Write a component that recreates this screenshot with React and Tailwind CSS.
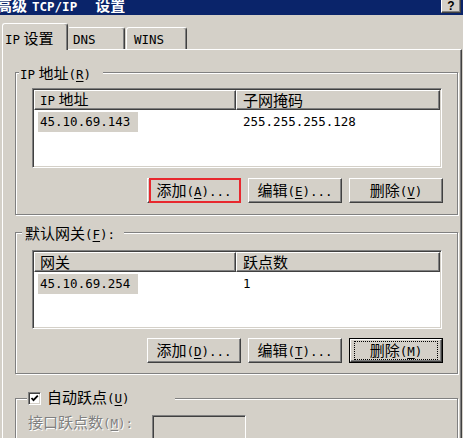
import React from 'react'

const raised = 'border border-t-white border-l-white border-r-[#404040] border-b-[#404040] shadow-[inset_-1px_-1px_0_#808080]'
const sunken = 'border border-t-[#808080] border-l-[#808080] border-r-white border-b-white shadow-[inset_1px_1px_0_#404040,inset_-1px_-1px_0_#d4d0c8]'
const etched = 'border border-[#808080] shadow-[inset_1px_1px_0_#fff,1px_1px_0_#fff]'

// SimSun draws latin at half width, a mono face gets close
function Latin({ children }) {
  return <span className="font-['DejaVu_Sans_Mono',monospace] text-[12.5px]">{children}</span>
}

function Key({ k, dots }) {
  return (
    <Latin>
      (<u className="underline-offset-2">{k}</u>){dots ? '...' : ''}
    </Latin>
  )
}

function Button({ children, isDefault, marked }) {
  if (isDefault) {
    return (
      <div className="w-[94px] h-[25px] border border-black bg-[#d4d0c8]">
        <div className={`h-full ${raised} px-[3px] py-px`}>
          <div className="h-full border border-dotted border-black flex items-center justify-center leading-[16px]">
            <span>{children}</span>
          </div>
        </div>
      </div>
    )
  }
  return (
    <div className={`relative w-[94px] h-[25px] bg-[#d4d0c8] ${raised} flex items-center justify-center leading-[16px]`}>
      <span>{children}</span>
      {marked && <span className="absolute -top-px -bottom-px left-px -right-px border-2 border-[#e8282e]" />}
    </div>
  )
}

function ListView({ height, col1, col2, val1, val2 }) {
  return (
    <div className={`${height} ${sunken} bg-white p-px`}>
      <div className="flex h-[20px] leading-[16px]">
        <div className={`w-[202px] ${raised} bg-[#d4d0c8] flex items-center pl-[5px]`}>
          <span className="whitespace-pre">{col1}</span>
        </div>
        <div className={`flex-1 ${raised} bg-[#d4d0c8] flex items-center pl-[6px]`}>
          <span>{col2}</span>
        </div>
      </div>
      <div className="mt-[2px] flex h-[20px] leading-[16px]">
        <div className="w-[202px] flex">
          <div className="ml-[4px] w-[100px] pl-[2px] bg-[#d4d0c8] flex items-center">
            <Latin>{val1}</Latin>
          </div>
        </div>
        <div className="flex-1 flex items-center pl-[7px]">
          <Latin>{val2}</Latin>
        </div>
      </div>
    </div>
  )
}

export default function App() {
  return (
    <div className="w-[463px] h-[438px] overflow-hidden bg-[#d4d0c8] text-black text-[15px] leading-none font-['Noto_Sans_CJK_SC','Noto_Sans_CJK_TC',sans-serif] select-none">
      {/* Barre de titre */}
      <div className="h-[15px] bg-[#0a246a] flex items-start justify-between overflow-hidden">
        <div className="-ml-[3px] -mt-[3px] h-[16px] leading-[16px] text-white font-bold whitespace-nowrap">
          高级
          <span className="ml-[5px]">
            <Latin>TCP/IP</Latin>
          </span>
          <span className="ml-[18px]">设置</span>
        </div>
        <div className={`mr-[2px] w-[20px] h-[14px] -mt-px bg-[#d4d0c8] ${raised} flex items-center justify-center text-[12px] font-bold font-['Liberation_Sans',sans-serif]`}>
          ?
        </div>
      </div>

      {/* Onglets */}
      <div className="h-[34px] pt-[8px] pl-[2px] flex items-end">
        <div className="relative z-10 w-[66px] h-[27px] -mb-px bg-[#d4d0c8] border-t border-l border-r border-t-white border-l-white border-r-[#404040] shadow-[inset_-1px_0_0_#808080] rounded-t-[3px] pl-[2px] pt-[6px] leading-[16px] whitespace-nowrap">
          <Latin>IP</Latin> 设置
        </div>
        <div className="w-[56px] h-[22px] ml-px border-t border-r border-t-white border-r-[#404040] shadow-[inset_-1px_0_0_#808080] rounded-tr-[3px] pl-[4px] pt-[2px] leading-[16px]">
          <Latin>DNS</Latin>
        </div>
        <div className="w-[61px] h-[22px] ml-px border-t border-l border-r border-t-white border-l-white border-r-[#404040] shadow-[inset_-1px_0_0_#808080] rounded-t-[3px] pl-[7px] pt-[2px] leading-[16px]">
          <Latin>WINS</Latin>
        </div>
      </div>

      {/* Panneau */}
      <div className="ml-[2px] w-[460px] h-[400px] border-t border-l border-r border-t-white border-l-white border-r-[#404040] shadow-[inset_-1px_0_0_#808080] pl-[12px]">
        {/* IP 地址 */}
        <div className={`relative mt-[22px] w-[443px] ${etched} pt-[15px] pl-[16px] pr-[15px] pb-[11px]`}>
          <div className="absolute left-[3px] -top-[8px] h-[16px] leading-[16px] pl-px pr-[12px] bg-[#d4d0c8] whitespace-nowrap">
            <Latin>IP</Latin> 地址<Key k="R" />
          </div>
          <ListView height="h-[80px]" col1={<><Latin>IP</Latin> 地址</>} col2="子网掩码" val1="45.10.69.143" val2="255.255.255.128" />
          <div className="mt-[10px] -mr-px flex justify-end gap-[7px]">
            <Button marked>添加<Key k="A" dots /></Button>
            <Button>编辑<Key k="E" dots /></Button>
            <Button>删除<Key k="V" /></Button>
          </div>
        </div>

        {/* 默认网关 */}
        <div className={`relative mt-[17px] w-[443px] ${etched} pt-[17px] pl-[16px] pr-[15px] pb-[10px]`}>
          <div className="absolute left-[6px] -top-[8px] h-[16px] leading-[16px] pl-[3px] pr-[9px] bg-[#d4d0c8] whitespace-nowrap">
            默认网关<Key k="F" /><Latin>:</Latin>
          </div>
          <ListView height="h-[79px]" col1="网关" col2="跃点数" val1="45.10.69.254" val2="1" />
          <div className="mt-[9px] -mr-px flex justify-end gap-[7px]">
            <Button>添加<Key k="D" dots /></Button>
            <Button>编辑<Key k="T" dots /></Button>
            <Button isDefault>删除<Key k="M" /></Button>
          </div>
        </div>

        {/* 自动跃点 */}
        <div className={`relative mt-[24px] w-[443px] ${etched} pt-[15px] pl-[12px] pb-[10px]`}>
          <div className="absolute left-[11px] -top-[9px] w-[148px] h-[16px] pl-px bg-[#d4d0c8] flex items-center gap-[6px] leading-[16px]">
            <div className={`w-[13px] h-[13px] bg-white ${sunken} flex items-center justify-center`}>
              <svg width="9" height="9" viewBox="0 0 9 9">
                <path d="M1.5 4 L3.5 6.2 L7.8 1.6" fill="none" stroke="#000" strokeWidth="1.8" />
              </svg>
            </div>
            <span className="whitespace-nowrap">
              自动跃点<Key k="U" />
            </span>
          </div>
          <div className="flex items-start">
            <div className="w-[124px] h-[16px] leading-[16px] text-[#808080] [text-shadow:1px_1px_0_#fff] whitespace-nowrap">
              接口跃点数<Key k="M" /><Latin>:</Latin>
            </div>
            <div className={`mt-px w-[94px] h-[26px] bg-[#d4d0c8] ${sunken}`} />
          </div>
        </div>
      </div>
    </div>
  )
}
